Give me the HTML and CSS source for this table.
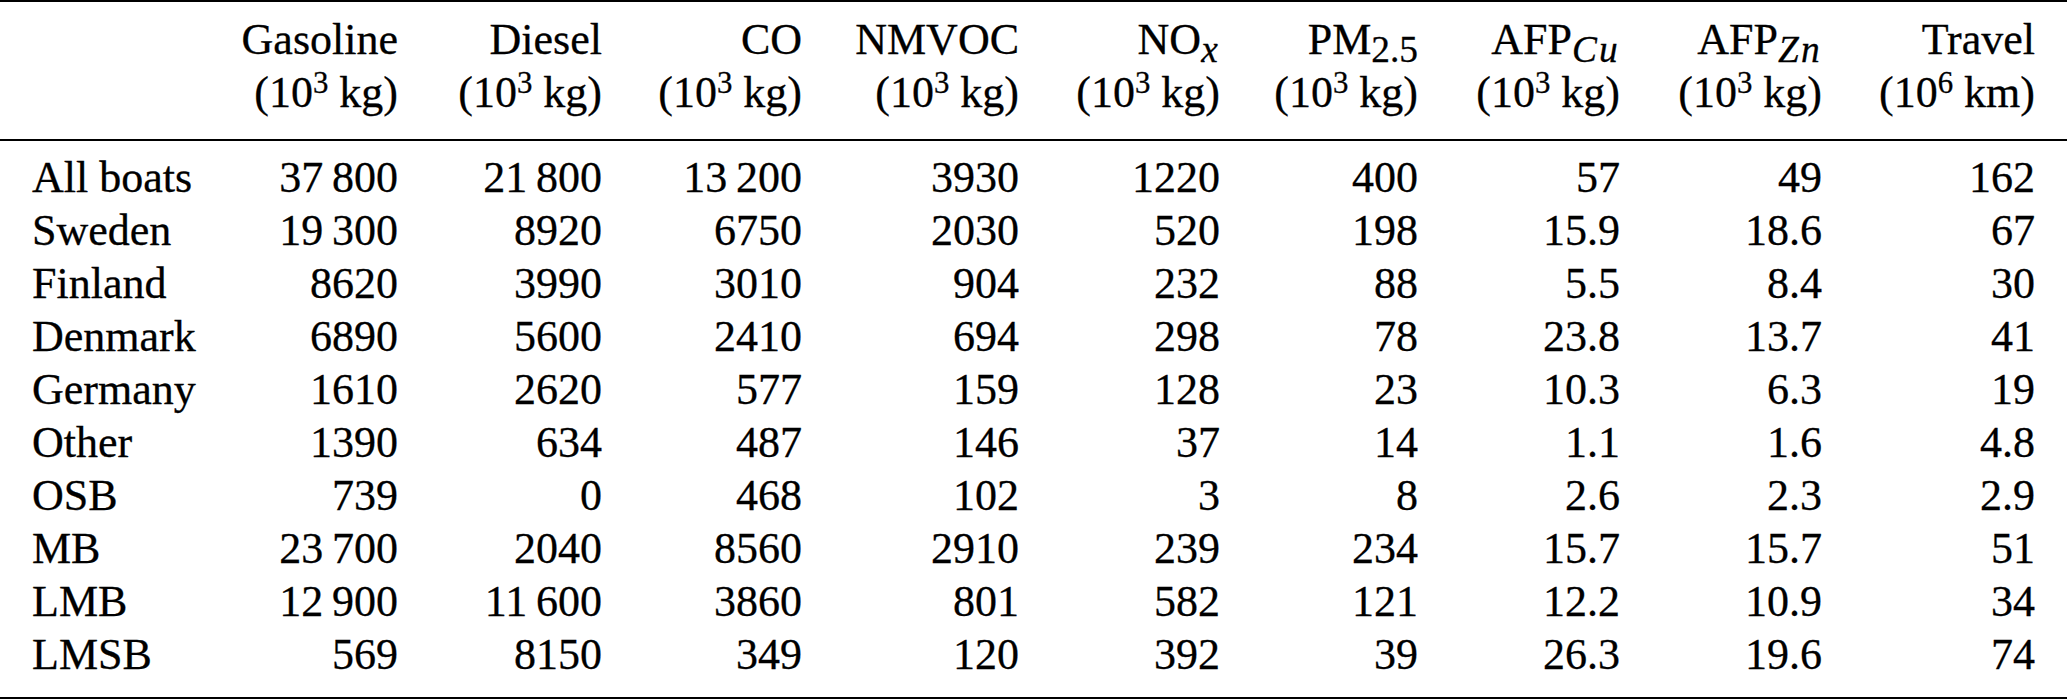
FILE: index.html
```html
<!DOCTYPE html>
<html>
    <head>
        <meta charset="utf-8" />
        <title>Emissions by boat group</title>
        <link rel="stylesheet" href="styles.css">
    </head>

    <body>
        <table class="emissions">
            <colgroup>
                <col class="c-name">
                <col class="c-gas">
                <col class="c-diesel">
                <col class="c-co">
                <col class="c-nmvoc">
                <col class="c-nox">
                <col class="c-pm">
                <col class="c-cu">
                <col class="c-zn">
                <col class="c-travel">
            </colgroup>
            <!-- header -->
            <thead>
                <tr>
                    <th></th>
                    <th>Gasoline<br>(10<span class="sup">3</span> kg)</th>
                    <th>Diesel<br>(10<span class="sup">3</span> kg)</th>
                    <th>CO<br>(10<span class="sup">3</span> kg)</th>
                    <th>NMVOC<br>(10<span class="sup">3</span> kg)</th>
                    <th>NO<span class="sub it">x</span><br>(10<span class="sup">3</span> kg)</th>
                    <th>PM<span class="sub">2.5</span><br>(10<span class="sup">3</span> kg)</th>
                    <th>AFP<span class="sub it">Cu</span><br>(10<span class="sup">3</span> kg)</th>
                    <th>AFP<span class="sub it">Zn</span><br>(10<span class="sup">3</span> kg)</th>
                    <th>Travel<br>(10<span class="sup">6</span> km)</th>
                </tr>
            </thead>
            <!-- rows -->
            <tbody>
                <tr><td>All boats</td><td>37&thinsp;800</td><td>21&thinsp;800</td><td>13&thinsp;200</td><td>3930</td><td>1220</td><td>400</td><td>57</td><td>49</td><td>162</td></tr>
                <tr><td>Sweden</td><td>19&thinsp;300</td><td>8920</td><td>6750</td><td>2030</td><td>520</td><td>198</td><td>15.9</td><td>18.6</td><td>67</td></tr>
                <tr><td>Finland</td><td>8620</td><td>3990</td><td>3010</td><td>904</td><td>232</td><td>88</td><td>5.5</td><td>8.4</td><td>30</td></tr>
                <tr><td>Denmark</td><td>6890</td><td>5600</td><td>2410</td><td>694</td><td>298</td><td>78</td><td>23.8</td><td>13.7</td><td>41</td></tr>
                <tr><td>Germany</td><td>1610</td><td>2620</td><td>577</td><td>159</td><td>128</td><td>23</td><td>10.3</td><td>6.3</td><td>19</td></tr>
                <tr><td>Other</td><td>1390</td><td>634</td><td>487</td><td>146</td><td>37</td><td>14</td><td>1.1</td><td>1.6</td><td>4.8</td></tr>
                <tr><td>OSB</td><td>739</td><td>0</td><td>468</td><td>102</td><td>3</td><td>8</td><td>2.6</td><td>2.3</td><td>2.9</td></tr>
                <tr><td>MB</td><td>23&thinsp;700</td><td>2040</td><td>8560</td><td>2910</td><td>239</td><td>234</td><td>15.7</td><td>15.7</td><td>51</td></tr>
                <tr><td>LMB</td><td>12&thinsp;900</td><td>11&thinsp;600</td><td>3860</td><td>801</td><td>582</td><td>121</td><td>12.2</td><td>10.9</td><td>34</td></tr>
                <tr><td>LMSB</td><td>569</td><td>8150</td><td>349</td><td>120</td><td>392</td><td>39</td><td>26.3</td><td>19.6</td><td>74</td></tr>
            </tbody>
        </table>
    </body>
</html>
```

FILE: styles.css
```css
body {
    margin: 0;
    background: #fff;
}

.emissions {
    width: 2067px;
    table-layout: fixed;
    border-collapse: separate;
    border-spacing: 0;
    border-top: 2px solid #000;
    border-bottom: 2px solid #000;
    font-family: "Liberation Serif", "Times New Roman", serif;
    font-size: 44px;
    line-height: 53px;
    color: #000;
    -webkit-text-stroke: 0.3px #000;
}

.c-name { width: 225px; }
.c-gas { width: 203px; }
.c-diesel { width: 204px; }
.c-co { width: 200px; }
.c-nmvoc { width: 217px; }
.c-nox { width: 201px; }
.c-pm { width: 198px; }
.c-cu { width: 202px; }
.c-zn { width: 202px; }
.c-travel { width: 215px; }

.emissions th,
.emissions td {
    padding: 0 30px 0 0;
    text-align: right;
    font-weight: normal;
    white-space: nowrap;
    vertical-align: baseline;
}

.emissions th:first-child,
.emissions td:first-child {
    padding: 0 0 0 32px;
    text-align: left;
}

.emissions th:last-child,
.emissions td:last-child {
    padding-right: 32px;
}

/* header block and midrule */
.emissions thead th {
    padding-top: 11px;
    padding-bottom: 20px;
    border-bottom: 2px solid #000;
}

.emissions tbody tr:first-child td {
    padding-top: 10px;
}

.emissions tbody tr:last-child td {
    padding-bottom: 16px;
}

.sup {
    font-size: 0.7em;
    line-height: 0;
    vertical-align: 0.45em;
}

.sub {
    font-size: 0.85em;
    line-height: 0;
    vertical-align: -0.22em;
}

.it {
    font-style: italic;
    letter-spacing: 0.06em;
}
```
